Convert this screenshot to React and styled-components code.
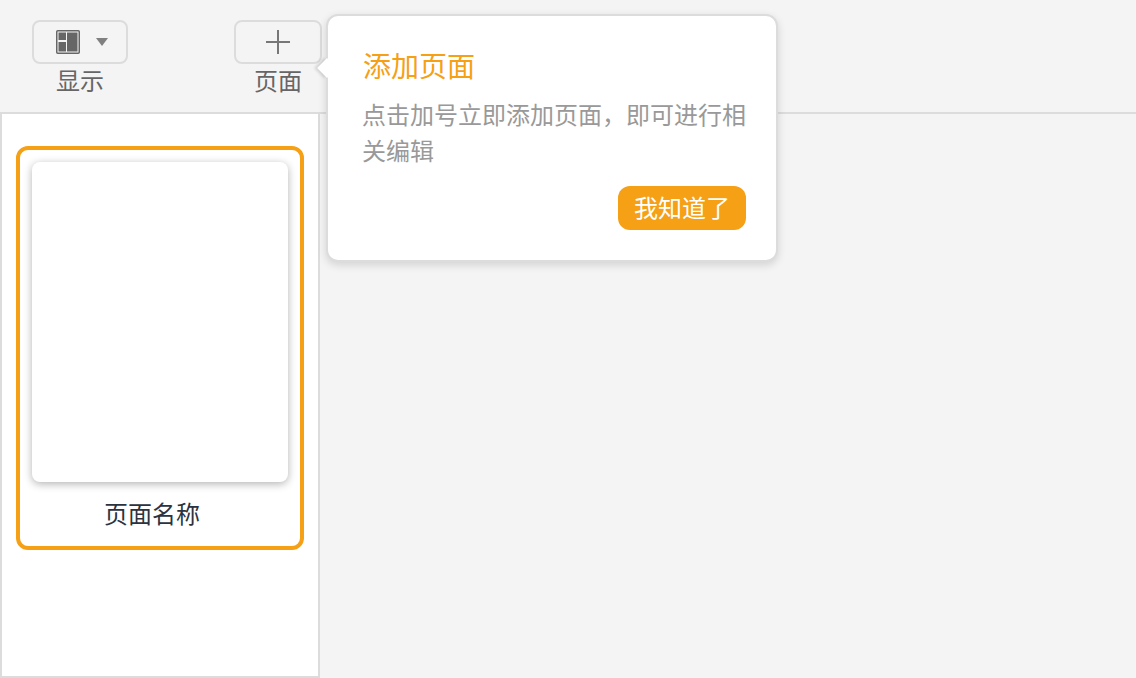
import React from "react"
import styled, { createGlobalStyle } from "styled-components"

const Global = createGlobalStyle`
  html, body {
    margin: 0;
    padding: 0;
    background: #f4f4f4;
  }
  * {
    box-sizing: border-box;
  }
`

const Page = styled.div`
  position: relative;
  width: 1136px;
  height: 678px;
  overflow: hidden;
  display: flex;
  flex-direction: column;
  font-family: "Noto Sans CJK SC", "Liberation Sans", sans-serif;
  background: #f4f4f4;
`

const Toolbar = styled.div`
  height: 114px;
  flex-shrink: 0;
  display: flex;
  align-items: flex-start;
  padding: 20px 0 0 32px;
  gap: 106px;
  border-bottom: 2px solid #dcdcdc;
`

const Tool = styled.div`
  display: flex;
  flex-direction: column;
  align-items: center;
  width: ${(p) => p.$width}px;
`

const ToolButton = styled.div`
  width: 100%;
  height: 44px;
  display: flex;
  align-items: center;
  justify-content: center;
  gap: 16px;
  border: 2px solid #dcdcdc;
  border-radius: 8px;
`

const ToolLabel = styled.div`
  margin-top: -1px;
  font-size: 24px;
  line-height: 34px;
  color: #666;
`

const Caret = styled.span`
  margin-right: -4px;
  width: 0;
  height: 0;
  border-left: 6.5px solid transparent;
  border-right: 6.5px solid transparent;
  border-top: 8px solid #808080;
`

const Sidebar = styled.div`
  width: 320px;
  flex: 1;
  padding: 32px 14px;
  background: #fff;
  border: 2px solid #dcdcdc;
  border-top: 0;
`

const PageCard = styled.div`
  height: 404px;
  padding: 12px;
  border: 4px solid #f5a015;
  border-radius: 12px;
`

const Thumb = styled.div`
  height: 320px;
  background: #fff;
  border-radius: 8px;
  box-shadow: 0 2px 8px rgba(0, 0, 0, 0.3);
`

const PageName = styled.div`
  margin-top: 13px;
  padding-right: 16px;
  font-size: 24px;
  line-height: 36px;
  text-align: center;
  color: #2c3340;
`

const Popover = styled.div`
  position: absolute;
  left: 326px;
  top: 14px;
  width: 452px;
  height: 248px;
  padding: 31px 30px 0 35px;
  background: #fff;
  border: 2px solid #dcdcdc;
  border-radius: 12px;
  box-shadow: 0 3px 8px rgba(0, 0, 0, 0.14);

  &::before {
    content: "";
    position: absolute;
    left: -8px;
    top: 45px;
    width: 14px;
    height: 14px;
    background: #fff;
    transform: rotate(45deg);
    box-shadow: -2px 2px 3px rgba(0, 0, 0, 0.14);
  }
`

const PopTitle = styled.div`
  position: relative;
  font-size: 28px;
  line-height: 36px;
  color: #f5a015;
`

const PopText = styled.div`
  margin-top: 13px;
  margin-left: -1px;
  font-size: 24px;
  line-height: 36px;
  color: #999;
`

const PopFooter = styled.div`
  margin-top: 18px;
  display: flex;
  justify-content: flex-end;
`

const GotIt = styled.button`
  width: 128px;
  height: 44px;
  padding: 0 0 2px;
  border: 0;
  border-radius: 12px;
  background: #f5a015;
  color: #fff;
  font-family: inherit;
  font-size: 24px;
  line-height: 42px;
`

const LayoutIcon = () => (
  <svg width="24" height="24" viewBox="0 0 24 24">
    <rect x="0.75" y="0.75" width="22.5" height="22.5" rx="1" fill="#f4f4f4" stroke="#666" strokeWidth="1.5" />
    <rect x="2.5" y="2.5" width="7.5" height="7.5" fill="#666" />
    <rect x="2.5" y="12" width="7.5" height="9.5" fill="#666" />
    <rect x="11" y="2.5" width="10.5" height="19" fill="#666" />
  </svg>
)

const PlusIcon = () => (
  <svg width="24" height="24" viewBox="0 0 24 24">
    <path d="M12 0V24M0 12H24" stroke="#777" strokeWidth="2" fill="none" />
  </svg>
)

export default function App() {
  return (
    <Page>
      <Global />
      <Toolbar>
        <Tool $width={96}>
          <ToolButton>
            <LayoutIcon />
            <Caret />
          </ToolButton>
          <ToolLabel>显示</ToolLabel>
        </Tool>
        <Tool $width={88}>
          <ToolButton>
            <PlusIcon />
          </ToolButton>
          <ToolLabel>页面</ToolLabel>
        </Tool>
      </Toolbar>
      <Sidebar>
        <PageCard>
          <Thumb />
          <PageName>页面名称</PageName>
        </PageCard>
      </Sidebar>
      <Popover>
        <PopTitle>添加页面</PopTitle>
        <PopText>点击加号立即添加页面，即可进行相关编辑</PopText>
        <PopFooter>
          <GotIt>我知道了</GotIt>
        </PopFooter>
      </Popover>
    </Page>
  )
}
